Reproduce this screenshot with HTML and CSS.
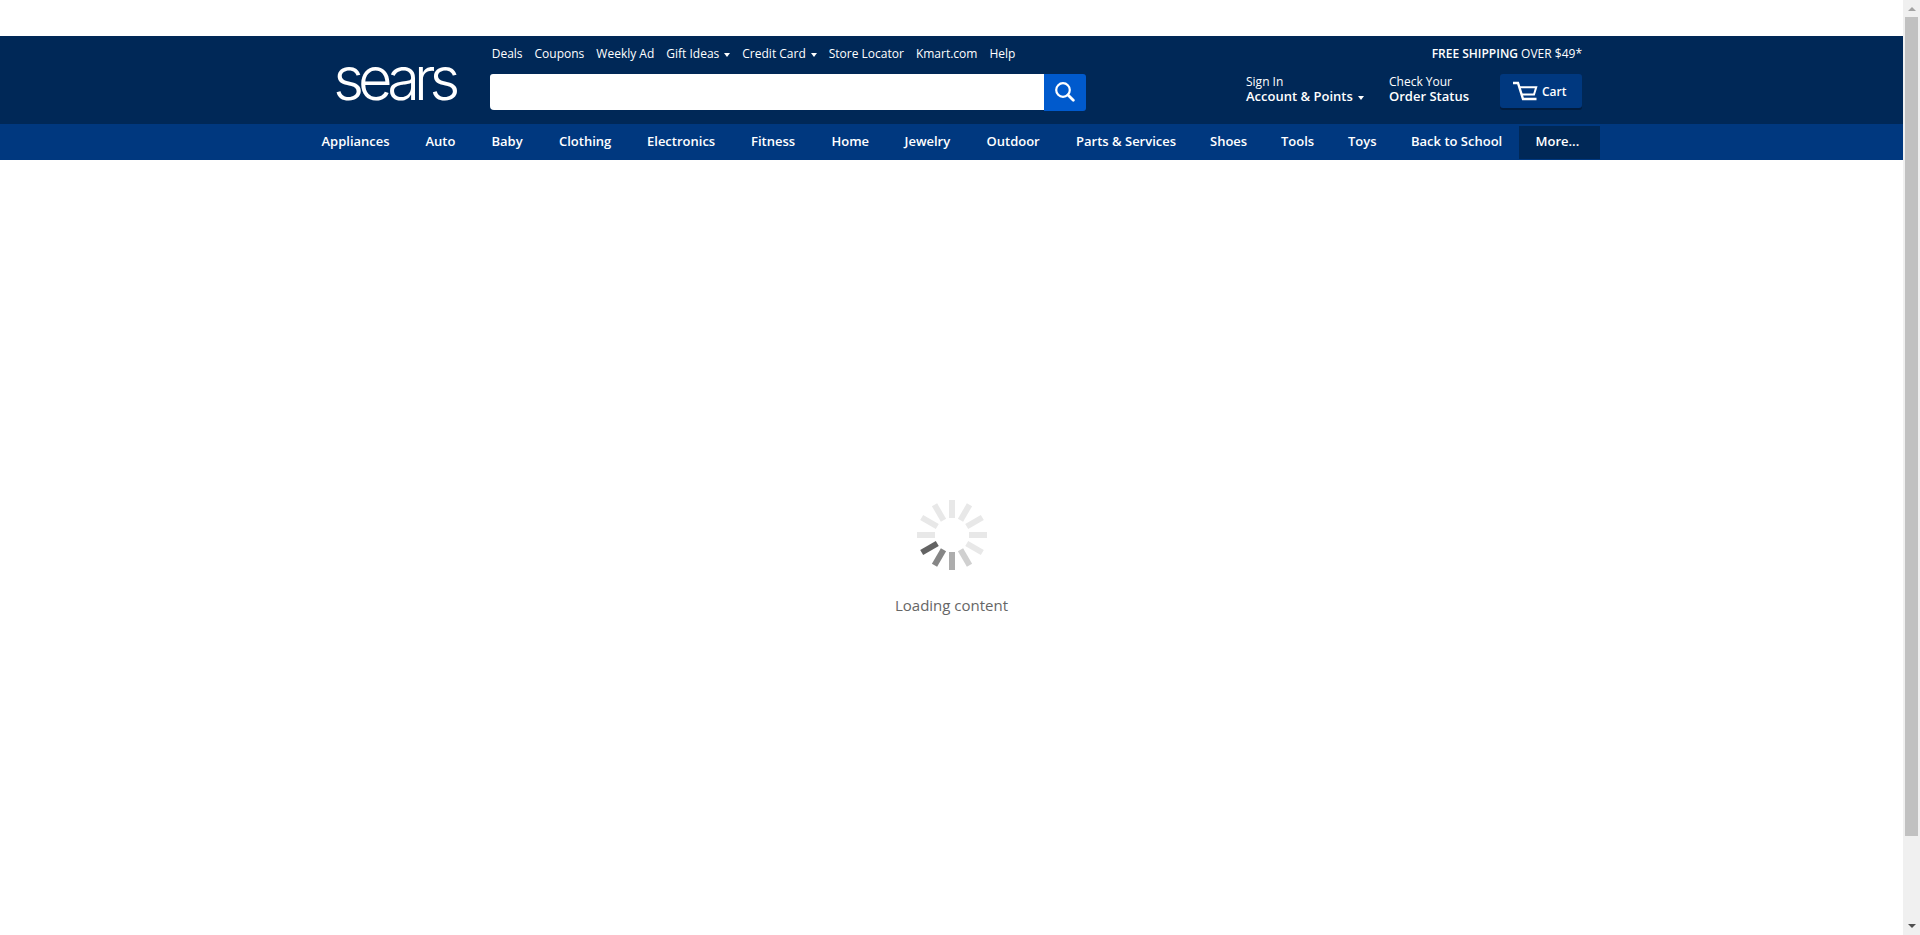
FILE: index.html
```html
<!DOCTYPE html>
<html lang="en">
<head>
<meta charset="utf-8">
<title>Sears</title>
<link rel="stylesheet" href="styles.css">
</head>
<body>
<div class="page">
  <header class="header">
    <div class="header-inner">
      <a class="logo"><svg width="132" height="76" viewBox="0 0 132 76"><text class="logo-text" x="-1.8" y="59" textLength="121" lengthAdjust="spacingAndGlyphs">sears</text></svg></a>
      <div class="middle">
        <nav class="links">
          <a>Deals</a><a>Coupons</a><a>Weekly Ad</a><a>Gift Ideas<i class="caret"></i></a><a>Credit Card<i class="caret"></i></a><a>Store Locator</a><a>Kmart.com</a><a>Help</a>
        </nav>
        <div class="search">
          <div class="field"></div>
          <div class="search-button"><svg width="20" height="20" viewBox="0 0 20 20" fill="none" stroke="#fff"><circle cx="8" cy="8" r="6.8" stroke-width="2.2"/><path d="M13 13l5.3 5.3" stroke-width="2.8" stroke-linecap="round"/></svg></div>
        </div>
      </div>
      <div class="right">
        <div class="shipping"><b>FREE SHIPPING</b> OVER $49*</div>
        <div class="tools">
          <a class="account">Sign In<b>Account &amp; Points<i class="caret"></i></b></a>
          <a class="order">Check Your<b>Order Status</b></a>
          <a class="cart"><svg width="25" height="20" viewBox="0 0 25 20" fill="none" stroke="#fff"><path d="M0 2h5l5 16h13.5" stroke-width="2.4"/><path d="M6 6.2h17.2l-2.2 7.3H8.5" stroke-width="2"/></svg>Cart</a>
        </div>
      </div>
    </div>
  </header>
  <nav class="departments">
    <div class="department-list">
      <a>Appliances</a><a>Auto</a><a>Baby</a><a>Clothing</a><a>Electronics</a><a>Fitness</a><a>Home</a><a>Jewelry</a><a>Outdoor</a><a>Parts &amp; Services</a><a>Shoes</a><a>Tools</a><a>Toys</a><a>Back to School</a><a class="more">More...</a>
    </div>
  </nav>
  <main class="loading">
    <svg width="72" height="72" viewBox="-36 -36 72 72">
      <g fill="#e8e8e8">
        <rect x="-3" y="-35" width="6" height="18"/>
        <rect x="-3" y="-35" width="6" height="18" transform="rotate(30)"/>
        <rect x="-3" y="-35" width="6" height="18" transform="rotate(60)"/>
        <rect x="-3" y="-35" width="6" height="18" transform="rotate(90)"/>
        <rect x="-3" y="-35" width="6" height="18" transform="rotate(120)"/>
        <rect x="-3" y="-35" width="6" height="18" transform="rotate(270)"/>
        <rect x="-3" y="-35" width="6" height="18" transform="rotate(300)"/>
        <rect x="-3" y="-35" width="6" height="18" transform="rotate(330)"/>
      </g>
      <rect x="-3" y="-35" width="6" height="18" fill="#d0d0d0" transform="rotate(150)"/>
      <rect x="-3" y="-35" width="6" height="18" fill="#adadad" transform="rotate(180)"/>
      <rect x="-3" y="-35" width="6" height="18" fill="#868686" transform="rotate(210)"/>
      <rect x="-3" y="-35" width="6" height="18" fill="#636363" transform="rotate(240)"/>
    </svg>
    <p class="loading-text">Loading content</p>
  </main>
</div>
<div class="scrollbar">
  <i class="arrow up"></i>
  <div class="thumb"></div>
  <i class="arrow down"></i>
</div>
</body>
</html>
```
FILE: styles.css
```css
* { box-sizing: border-box; }
body {
  margin: 0;
  height: 935px;
  display: flex;
  overflow: hidden;
  background: #fff;
  font: 12px/16px "Open Sans", sans-serif;
  color: #fff;
}
.page { width: 1903px; padding-top: 36px; }
.header { height: 88px; background: #002857; }
.header-inner { display: flex; padding-left: 335px; }
.logo { width: 155px; padding-top: 5px; }
.logo svg { display: block; overflow: visible; }
.logo-text { font: 300 60px Inter, sans-serif; letter-spacing: -6px; fill: #fff; }
.middle { width: 596px; padding-top: 10px; }
.links { display: flex; gap: 12px; padding-left: 1.7px; height: 28px; white-space: nowrap; }
.caret {
  display: inline-block;
  margin-left: 5px;
  border: 3px solid transparent;
  border-top: 4px solid #fff;
  border-bottom: 0;
  vertical-align: 1px;
}
.search { display: flex; }
.field { width: 554px; height: 36px; background: #fff; border-radius: 3px 0 0 4px; }
.search-button {
  width: 42px;
  height: 37px;
  padding: 8px 0 0 11px;
  background: #005acd;
  border-radius: 0 3px 3px 0;
}
.search-button svg { display: block; }
.right { width: 336px; margin-left: 160px; padding-top: 10px; }
.shipping { height: 28px; text-align: right; }
.shipping b { font-weight: 600; }
.tools { display: flex; line-height: 15px; }
.tools b { display: block; font-size: 13px; font-weight: 600; }
.account { width: 143px; }
.order { width: 111px; }
.cart {
  display: flex;
  align-items: center;
  gap: 4px;
  width: 82px;
  height: 34px;
  padding-left: 13px;
  background: #00387f;
  border-radius: 3px;
  box-shadow: 0 2px 0 #001c3f;
  font-weight: 600;
}
.departments { height: 36px; background: #00387f; }
.department-list {
  display: grid;
  grid-template-columns: 104px 66px 67.5px 88px 104px 80.5px 73px 82px 89.5px 134px 71px 67px 63px 107.5px 81px;
  padding: 2px 0 0 321.5px;
  font-size: 13px;
  font-weight: 600;
  line-height: 30px;
  white-space: nowrap;
}
.more { height: 33px; padding-left: 17px; background: #002857; }
.loading { display: flex; flex-direction: column; align-items: center; padding-top: 338px; }
.loading svg { margin-top: 1px; }
.loading-text { margin: 23px 0 0; font-size: 15px; line-height: 22px; color: #666; }
.scrollbar {
  display: flex;
  flex-direction: column;
  align-items: center;
  width: 17px;
  height: 935px;
  background: #f0f0f0;
}
.arrow { border: 4px solid transparent; }
.up { margin: 7px 0 6px; border-top: 0; border-bottom-color: #a3a3a3; }
.thumb { width: 13px; height: 819px; background: #c1c1c1; }
.down { margin-top: 88px; border-bottom: 0; border-top-color: #505050; }
```
